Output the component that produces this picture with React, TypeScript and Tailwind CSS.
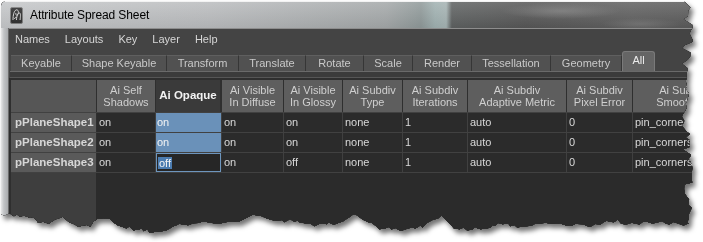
import React from "react";

const tabs: { label: string; w: string }[] = [
  { label: "Keyable", w: "w-[61px]" },
  { label: "Shape Keyable", w: "w-[95px]" },
  { label: "Transform", w: "w-[72px]" },
  { label: "Translate", w: "w-[67px]" },
  { label: "Rotate", w: "w-[58px]" },
  { label: "Scale", w: "w-[49px]" },
  { label: "Render", w: "w-[59px]" },
  { label: "Tessellation", w: "w-[79px]" },
  { label: "Geometry", w: "w-[71px]" },
];

const headers: { l1: string; l2?: string; bold?: boolean }[] = [
  { l1: "Ai Self", l2: "Shadows" },
  { l1: "Ai Opaque", bold: true },
  { l1: "Ai Visible", l2: "In Diffuse" },
  { l1: "Ai Visible", l2: "In Glossy" },
  { l1: "Ai Subdiv", l2: "Type" },
  { l1: "Ai Subdiv", l2: "Iterations" },
  { l1: "Ai Subdiv", l2: "Adaptive Metric" },
  { l1: "Ai Subdiv", l2: "Pixel Error" },
  { l1: "Ai Subdiv", l2: "Smoothing" },
];

const rows = [
  { name: "pPlaneShape1", v: ["on", "on", "on", "on", "none", "1", "auto", "0", "pin_corners"] },
  { name: "pPlaneShape2", v: ["on", "on", "on", "on", "none", "1", "auto", "0", "pin_corners"] },
  { name: "pPlaneShape3", v: ["on", "off", "on", "off", "none", "1", "auto", "0", "pin_corners"] },
];

const grid = "grid grid-cols-[86px_59px_66px_62px_59px_60px_65px_99px_66px_100px]";

function tornClip(): string {
  let s = 12345;
  const rnd = () => {
    s = (s * 16807) % 2147483647;
    return s / 2147483647;
  };
  const pts: string[] = ["0px 5px", "1px 2px", "4px 0px"];
  // right edge, top -> bottom
  let y = 0;
  while (y < 222) {
    const notch = rnd() < 0.18 ? -4 - rnd() * 3 : 0;
    const x = 685 + Math.sin(y / 23) * 2 + rnd() * 5 + notch;
    pts.push(`${x.toFixed(1)}px ${y.toFixed(1)}px`);
    y += 2 + rnd() * 4;
  }
  // bottom edge, right -> left, via waypoints
  const wp: [number, number][] = [
    [688, 224], [660, 221], [630, 223], [610, 219], [590, 226], [560, 222], [540, 224],
    [520, 226], [500, 223], [480, 228], [455, 227], [440, 216], [425, 224], [400, 229],
    [375, 226], [355, 214], [335, 222], [310, 224], [290, 219], [270, 220], [252, 214],
    [235, 221], [200, 222], [178, 224], [160, 231], [135, 229], [110, 220], [100, 215],
    [90, 224], [70, 224], [60, 215], [50, 221], [40, 222], [25, 214], [0, 213],
  ];
  let x = 688;
  let i = 0;
  while (x > 0) {
    while (i < wp.length - 2 && wp[i + 1][0] > x) i++;
    const [x0, y0] = wp[i];
    const [x1, y1] = wp[i + 1];
    const t = (x0 - x) / (x0 - x1);
    const yy = y0 + (y1 - y0) * t + (rnd() - 0.5) * 4;
    pts.push(`${x.toFixed(1)}px ${yy.toFixed(1)}px`);
    x -= 2 + rnd() * 4;
  }
  pts.push("0px 213px");
  return `polygon(${pts.join(", ")})`;
}

function MayaIcon() {
  return (
    <svg width="13" height="17" viewBox="0 0 13 17" className="shrink-0">
      <rect x="0.5" y="0.5" width="12" height="16" rx="1.5" fill="#2d2d2d" stroke="#7c7c7c" />
      <path
        d="M3 13 C3 8 4 4 6 3 C8 2 9 5 8 7 C7 9 5 8 6 6 M6.5 13 C6.5 9 8 6 9.5 6 C11 6 10.5 10 10 13 M4.5 12 C5 10 6 10 7 11"
        fill="none"
        stroke="#d8d8d8"
        strokeWidth="1"
      />
    </svg>
  );
}

export default function App() {
  const clip = tornClip();
  return (
    <div className="w-[703px] h-[242px] bg-white overflow-hidden font-['Liberation_Sans',Arial,sans-serif]">
      <div className="pt-[1px] pl-[1px] [filter:drop-shadow(0_0_0.5px_#000)_drop-shadow(3px_4px_2.5px_rgba(0,0,0,0.55))]">
        <div className="w-[700px] h-[238px] flex flex-col bg-[#444]" style={{ clipPath: clip }}>
          {/* title bar */}
          <div className="h-[27px] shrink-0 flex items-center gap-[7px] pl-[9px] border-t border-[#f2f2f2] bg-[linear-gradient(90deg,#c4c6c8_0%,#b9bbbd_30%,#a3a7a8_55%,#8e9898_60%,#9fb0b0_62%,#a4b2b2_63.6%,#5d6060_64.4%,#565656_75%,#5f5f5f_90%,#5a5a5a_100%)] relative">
            <div className="absolute inset-0 bg-[radial-gradient(ellipse_60px_8px_at_560px_9px,rgba(150,150,150,0.55),transparent),radial-gradient(ellipse_40px_6px_at_640px_22px,rgba(140,140,140,0.4),transparent),linear-gradient(180deg,rgba(255,255,255,0.15),rgba(0,0,0,0.05))]" />
            <MayaIcon />
            <span className="relative text-[12px] text-black tracking-[-0.1px]">Attribute Spread Sheet</span>
          </div>
          {/* body */}
          <div className="flex flex-1 min-h-0">
            <div className="w-[8px] shrink-0 bg-[linear-gradient(90deg,#e6e6e6,#c2c4c6_40%,#a9abad)] border-r border-[#6a6a6a]" />
            <div className="flex-1 flex flex-col min-w-0 bg-[#444] border-t border-[#8d8d8d]">
              {/* menu */}
              <div className="h-[21px] shrink-0 flex items-center gap-[15px] pl-[6px] text-[11px] text-[#d6d6d6]">
                <span>Names</span>
                <span>Layouts</span>
                <span>Key</span>
                <span>Layer</span>
                <span>Help</span>
              </div>
              {/* tabs */}
              <div className="h-[21px] shrink-0 flex items-end pl-[2px] text-[11px]">
                {tabs.map((t) => (
                  <div
                    key={t.label}
                    className={`${t.w} h-[16px] shrink-0 flex items-center justify-center bg-[#515151] border-t border-[#5f5f5f] border-r border-r-[#363636] text-[#c9c9c9] leading-none`}
                  >
                    {t.label}
                  </div>
                ))}
                <div className="w-[33px] h-[20px] shrink-0 flex items-center justify-center bg-[#656565] rounded-t-[3px] border-t border-x border-[#7a7a7a] text-[#ececec] leading-none pb-[2px]">
                  All
                </div>
              </div>
              {/* strip */}
              <div className="h-[7px] shrink-0 ml-[1px] bg-[#3b3b3b] border-t border-[#6a6a6a] border-b border-b-[#565656]" />
              {/* table */}
              <div className="flex-1 flex flex-col bg-[#2f2f2f] pt-[2px] pl-[2px] text-[11px]">
                <div className={grid}>
                  <div className="h-[32px] bg-[#565656] border-r border-[#2f2f2f]" />
                  {headers.map((h, i) => (
                    <div
                      key={i}
                      className={
                        h.bold
                          ? "h-[32px] bg-[#3a3a3a] border-r-2 border-[#2f2f2f] flex items-center justify-center font-bold text-[11.5px] text-[#f2f2f2]"
                          : "h-[32px] bg-[#5e5e5e] border-r border-[#2f2f2f] flex flex-col items-center justify-center text-[#cfcfcf] leading-[12px] whitespace-nowrap overflow-hidden"
                      }
                    >
                      <span>{h.l1}</span>
                      {h.l2 && <span>{h.l2}</span>}
                    </div>
                  ))}
                </div>
                {rows.map((r, ri) => (
                  <div key={r.name} className={`${grid} border-t border-[#414141]`}>
                    <div className="h-[19px] bg-[#5a5a5a] border-r border-[#2f2f2f] flex items-center pl-[4px] font-bold text-[11.5px] text-[#d6d6d6] whitespace-nowrap">
                      {r.name}
                    </div>
                    {r.v.map((v, ci) => {
                      if (ci === 1 && ri < 2) {
                        return (
                          <div key={ci} className="h-[19px] bg-[#6a91b9] border-r border-[#404040] flex items-center pl-[1px] text-[#f4f4f4]">
                            {v}
                          </div>
                        );
                      }
                      if (ci === 1 && ri === 2) {
                        return (
                          <div key={ci} className="h-[19px] bg-[#262626] border border-[#6d95bd] mr-[1px] flex items-center pl-[1px]">
                            <span className="bg-[#4c7cb0] text-[#f4f4f4] px-[1px] leading-[12px]">{v}</span>
                          </div>
                        );
                      }
                      return (
                        <div key={ci} className="h-[19px] bg-[#2b2b2b] border-r border-[#404040] flex items-center pl-[2px] text-[#d8d8d8] whitespace-nowrap overflow-hidden">
                          {v}
                        </div>
                      );
                    })}
                  </div>
                ))}
                <div className="flex-1 flex border-t border-[#414141]">
                  <div className="w-[85px] bg-[#3e3e3e]" />
                  <div className="flex-1 bg-[#2b2b2b]" />
                </div>
              </div>
            </div>
          </div>
        </div>
      </div>
    </div>
  );
}
